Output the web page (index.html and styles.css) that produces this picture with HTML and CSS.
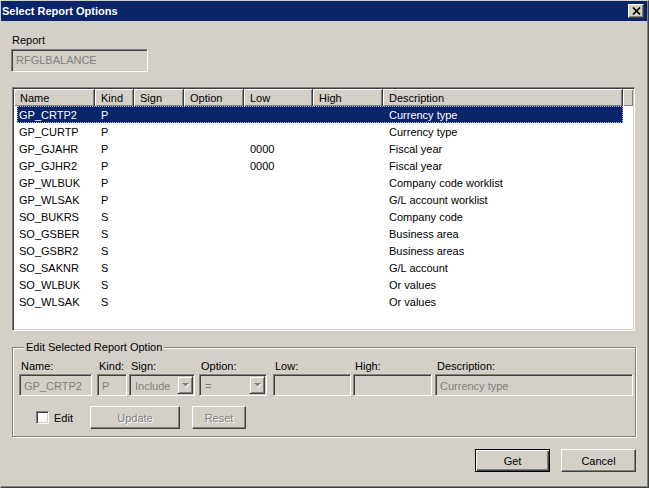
FILE: index.html
```html
<!DOCTYPE html>
<html>
<head>
<meta charset="utf-8">
<link rel="stylesheet" href="styles.css">
</head>
<body>
<div class="window">
  <div class="titlebar">
    <span class="title">Select Report Options</span>
    <span class="close-btn"><svg width="9" height="8" viewBox="0 0 9 8"><path d="M1 0.5L8 7.5M8 0.5L1 7.5" stroke="#000" stroke-width="1.7" fill="none"/></svg></span>
  </div>
  <div class="content">
    <div class="label report-label">Report</div>
    <div class="sunken field report-field">RFGLBALANCE</div>

    <div class="sunken listbox">
      <div class="list-header">
        <div class="hcell">Name</div>
        <div class="hcell">Kind</div>
        <div class="hcell">Sign</div>
        <div class="hcell">Option</div>
        <div class="hcell">Low</div>
        <div class="hcell">High</div>
        <div class="hcell">Description</div>
        <div class="hcell filler"></div>
      </div>
      <div class="list-rows">
        <div class="row selected"><span>GP_CRTP2</span><span>P</span><span></span><span></span><span></span><span></span><span>Currency type</span></div>
        <div class="row"><span>GP_CURTP</span><span>P</span><span></span><span></span><span></span><span></span><span>Currency type</span></div>
        <div class="row"><span>GP_GJAHR</span><span>P</span><span></span><span></span><span>0000</span><span></span><span>Fiscal year</span></div>
        <div class="row"><span>GP_GJHR2</span><span>P</span><span></span><span></span><span>0000</span><span></span><span>Fiscal year</span></div>
        <div class="row"><span>GP_WLBUK</span><span>P</span><span></span><span></span><span></span><span></span><span>Company code worklist</span></div>
        <div class="row"><span>GP_WLSAK</span><span>P</span><span></span><span></span><span></span><span></span><span>G/L account worklist</span></div>
        <div class="row"><span>SO_BUKRS</span><span>S</span><span></span><span></span><span></span><span></span><span>Company code</span></div>
        <div class="row"><span>SO_GSBER</span><span>S</span><span></span><span></span><span></span><span></span><span>Business area</span></div>
        <div class="row"><span>SO_GSBR2</span><span>S</span><span></span><span></span><span></span><span></span><span>Business areas</span></div>
        <div class="row"><span>SO_SAKNR</span><span>S</span><span></span><span></span><span></span><span></span><span>G/L account</span></div>
        <div class="row"><span>SO_WLBUK</span><span>S</span><span></span><span></span><span></span><span></span><span>Or values</span></div>
        <div class="row"><span>SO_WLSAK</span><span>S</span><span></span><span></span><span></span><span></span><span>Or values</span></div>
      </div>
    </div>

    <fieldset class="group">
      <legend>Edit Selected Report Option</legend>
      <div class="edit-fields">
        <div class="col col-name">
          <div class="label">Name:</div>
          <div class="sunken field">GP_CRTP2</div>
        </div>
        <div class="col col-kind">
          <div class="label">Kind:</div>
          <div class="sunken field">P</div>
        </div>
        <div class="col col-sign">
          <div class="label">Sign:</div>
          <div class="sunken field combo"><span class="combo-text">Include</span><span class="drop-btn"><svg width="7" height="5" viewBox="0 0 7 5"><path d="M1 1H8L4.5 4.5Z" fill="#fff"/><path d="M0 0H7L3.5 3.5Z" fill="#808080"/></svg></span></div>
        </div>
        <div class="col col-option">
          <div class="label">Option:</div>
          <div class="sunken field combo"><span class="combo-text">=</span><span class="drop-btn"><svg width="7" height="5" viewBox="0 0 7 5"><path d="M1 1H8L4.5 4.5Z" fill="#fff"/><path d="M0 0H7L3.5 3.5Z" fill="#808080"/></svg></span></div>
        </div>
        <div class="col col-low">
          <div class="label">Low:</div>
          <div class="sunken field"></div>
        </div>
        <div class="col col-high">
          <div class="label">High:</div>
          <div class="sunken field"></div>
        </div>
        <div class="col col-desc">
          <div class="label">Description:</div>
          <div class="sunken field">Currency type</div>
        </div>
      </div>
      <div class="edit-actions">
        <div class="check-wrap"><span class="sunken checkbox"></span><span class="check-label">Edit</span></div>
        <div class="button disabled btn-update">Update</div>
        <div class="button disabled btn-reset">Reset</div>
      </div>
    </fieldset>

    <div class="footer">
      <div class="button default">Get</div>
      <div class="button">Cancel</div>
    </div>
  </div>
</div>
</body>
</html>
```

FILE: styles.css
```css
* { box-sizing: border-box; }
html, body { margin: 0; padding: 0; }
body {
  width: 649px;
  height: 488px;
  overflow: hidden;
  background: #d4d0c8;
  font-family: "Liberation Sans", Arial, sans-serif;
  font-size: 11px;
  color: #000;
}
.window {
  width: 649px;
  height: 488px;
  background: #d4d0c8;
  border-top: 1px solid #d4d0c8;
  border-left: 1px solid #d4d0c8;
  border-right: 1px solid #404040;
  border-bottom: 1px solid #404040;
  box-shadow: inset -1px -1px #808080;
  display: flex;
  flex-direction: column;
}
.titlebar {
  height: 20px;
  margin-right: 1px;
  background: #0a246a;
  color: #fff;
  font-weight: bold;
  font-size: 11px;
  display: flex;
  align-items: center;
  justify-content: space-between;
  padding: 0 3px 0 1px;
}
.close-btn {
  width: 16px;
  height: 14px;
  background: #d4d0c8;
  border: 1px solid;
  border-color: #fff #404040 #404040 #fff;
  box-shadow: inset -1px -1px #808080;
  display: flex;
  align-items: center;
  justify-content: center;
}
.close-btn svg { display: block; }

.content {
  flex: 1;
  display: flex;
  flex-direction: column;
  padding-top: 13px;
}
.label {
  height: 13px;
  line-height: 13px;
  white-space: nowrap;
}
.report-label { margin-left: 11px; }

.sunken {
  border: 1px solid;
  border-color: #808080 #fff #fff #808080;
  box-shadow: inset 1px 1px #404040, inset -1px -1px #d4d0c8;
  padding: 1px;
}
.field {
  height: 22px;
  line-height: 20px;
  padding-left: 4px;
  color: #808080;
  white-space: nowrap;
  overflow: hidden;
}
.report-field {
  margin: 2px 0 0 10px;
  width: 137px;
  height: 23px;
  line-height: 18px;
}

.listbox {
  margin: 15px 0 0 11px;
  width: 623px;
  height: 244px;
  background: #fff;
  display: flex;
  flex-direction: column;
}
.list-header {
  display: grid;
  grid-template-columns: 81px 39px 50px 60px 69px 70px 240px 10px;
  height: 17px;
  background: #d4d0c8;
}
.hcell {
  border-right: 1px solid #404040;
  border-bottom: 1px solid #404040;
  box-shadow: inset 1px 1px #fff, inset -1px -1px #808080;
  padding: 1px 0 0 6px;
  line-height: 16px;
  white-space: nowrap;
}
.hcell.filler { border-right: none; }
.list-rows {
  flex: 1;
  background: #fff;
}
.row {
  margin-left: 3px;
  width: 606px;
  height: 17px;
  line-height: 17px;
  display: grid;
  grid-template-columns: 78px 39px 50px 60px 69px 70px 240px;
  white-space: nowrap;
}
.row span { padding: 1px 0 0 6px; }
.row span:first-child { padding-left: 2px; }
.row.selected {
  background: #0a246a;
  color: #fff;
  outline: 1px dotted #b8b8c8;
  outline-offset: -1px;
}

.group {
  margin: 10px 0 0 11px;
  width: 624px;
  padding: 6px 0 7px 6px;
  border: 1px solid #808080;
  box-shadow: inset 1px 1px #fff, 1px 1px #fff;
  min-width: 0;
}
.group legend {
  margin-left: 5px;
  padding: 0 2px;
  height: 13px;
  line-height: 13px;
  background: #d4d0c8;
}
.edit-fields {
  display: flex;
}
.col {
  display: flex;
  flex-direction: column;
}
.col .label {
  padding-left: 2px;
  margin-bottom: 1px;
}
.col-name { width: 73px; }
.col-kind { width: 30px; margin-left: 5px; }
.col-sign { width: 66px; margin-left: 2px; }
.col-option { width: 68px; margin-left: 4px; }
.col-low { width: 78px; margin-left: 6px; }
.col-high { width: 79px; margin-left: 2px; }
.col-desc { width: 198px; margin-left: 3px; }

.combo {
  display: flex;
  padding-right: 1px;
}
.combo-text {
  flex: 1;
  padding-left: 1px;
}
.drop-btn {
  width: 16px;
  height: 18px;
  background: #d4d0c8;
  border: 1px solid;
  border-color: #d4d0c8 #404040 #404040 #d4d0c8;
  box-shadow: inset 1px 1px #fff, inset -1px -1px #808080;
  display: flex;
  align-items: center;
  justify-content: center;
}
.drop-btn svg { display: block; overflow: visible; }

.edit-actions {
  display: flex;
  align-items: center;
  margin-top: 10px;
  padding-left: 17px;
}
.check-wrap {
  width: 54px;
  display: flex;
  align-items: center;
}
.checkbox {
  width: 13px;
  height: 13px;
  background: #fff;
  box-shadow: inset 1px 1px #404040, inset -1px -1px #d4d0c8;
}
.check-label { margin-left: 5px; }

.button {
  height: 23px;
  width: 75px;
  line-height: 22px;
  text-align: center;
  border: 1px solid;
  border-color: #fff #404040 #404040 #fff;
  box-shadow: inset -1px -1px #808080;
  background: #d4d0c8;
}
.button.disabled {
  color: #808080;
  text-shadow: 1px 1px #fff;
}
.btn-update { width: 90px; }
.btn-reset { width: 54px; margin-left: 12px; }
.button.default {
  border: 1px solid #000;
  box-shadow: inset 1px 1px #fff, inset -1px -1px #404040, inset -2px -2px #808080;
}

.footer {
  display: flex;
  justify-content: flex-end;
  gap: 11px;
  margin-top: 12px;
  padding-right: 12px;
}
```
